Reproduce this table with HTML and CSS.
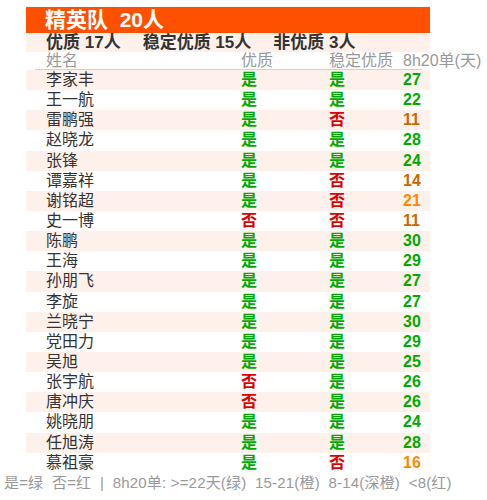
FILE: index.html
```html
<!DOCTYPE html>
<html lang="zh-CN">
<head>
    <meta charset="UTF-8">
    <meta name="viewport" content="width=device-width, initial-scale=1.0">
    <title>精英队</title>
    <link rel="stylesheet" href="styles.css">
</head>
<body>
    <div class="team-board">
        <div class="team-title">精英队&nbsp;&nbsp;20人</div>
        <div class="team-summary">
            <span>优质 17人</span>
            <span>稳定优质 15人</span>
            <span>非优质 3人</span>
        </div>
        <div class="team-row team-head">
            <div>姓名</div>
            <div>优质</div>
            <div>稳定优质</div>
            <div>8h20单(天)</div>
        </div>
        <div class="team-row"><div>李家丰</div><div class="yes">是</div><div class="yes">是</div><div class="d-green">27</div></div>
        <div class="team-row"><div>王一航</div><div class="yes">是</div><div class="yes">是</div><div class="d-green">22</div></div>
        <div class="team-row"><div>雷鹏强</div><div class="yes">是</div><div class="no">否</div><div class="d-dark">11</div></div>
        <div class="team-row"><div>赵晓龙</div><div class="yes">是</div><div class="yes">是</div><div class="d-green">28</div></div>
        <div class="team-row"><div>张锋</div><div class="yes">是</div><div class="yes">是</div><div class="d-green">24</div></div>
        <div class="team-row"><div>谭嘉祥</div><div class="yes">是</div><div class="no">否</div><div class="d-dark">14</div></div>
        <div class="team-row"><div>谢铭超</div><div class="yes">是</div><div class="no">否</div><div class="d-orange">21</div></div>
        <div class="team-row"><div>史一博</div><div class="no">否</div><div class="no">否</div><div class="d-dark">11</div></div>
        <div class="team-row"><div>陈鹏</div><div class="yes">是</div><div class="yes">是</div><div class="d-green">30</div></div>
        <div class="team-row"><div>王海</div><div class="yes">是</div><div class="yes">是</div><div class="d-green">29</div></div>
        <div class="team-row"><div>孙朋飞</div><div class="yes">是</div><div class="yes">是</div><div class="d-green">27</div></div>
        <div class="team-row"><div>李旋</div><div class="yes">是</div><div class="yes">是</div><div class="d-green">27</div></div>
        <div class="team-row"><div>兰晓宁</div><div class="yes">是</div><div class="yes">是</div><div class="d-green">30</div></div>
        <div class="team-row"><div>党田力</div><div class="yes">是</div><div class="yes">是</div><div class="d-green">29</div></div>
        <div class="team-row"><div>吴旭</div><div class="yes">是</div><div class="yes">是</div><div class="d-green">25</div></div>
        <div class="team-row"><div>张宇航</div><div class="no">否</div><div class="yes">是</div><div class="d-green">26</div></div>
        <div class="team-row"><div>唐冲庆</div><div class="no">否</div><div class="yes">是</div><div class="d-green">26</div></div>
        <div class="team-row"><div>姚晓朋</div><div class="yes">是</div><div class="yes">是</div><div class="d-green">24</div></div>
        <div class="team-row"><div>任旭涛</div><div class="yes">是</div><div class="yes">是</div><div class="d-green">28</div></div>
        <div class="team-row"><div>慕祖豪</div><div class="yes">是</div><div class="no">否</div><div class="d-orange">16</div></div>
    </div>
    <div class="legend">是=绿&nbsp;&nbsp;否=红&nbsp;&nbsp;|&nbsp;&nbsp;8h20单: &gt;=22天(绿)&nbsp;&nbsp;15-21(橙)&nbsp;&nbsp;8-14(深橙)&nbsp;&nbsp;&lt;8(红)</div>
</body>
</html>
```

FILE: styles.css
```css
body {
    margin: 0;
    padding-top: 7px;
    font-family: "Liberation Sans", "Noto Sans CJK SC", sans-serif;
    color: #333;
    background: #fff;
}
.team-board {
    width: 404px;
    margin-left: 26px;
}
.team-title {
    height: 26px;
    line-height: 25px;
    padding-left: 19px;
    background: #ff5000;
    color: #fff;
    font-size: 21px;
    font-weight: bold;
}
.team-summary {
    display: flex;
    gap: 22px;
    height: 19px;
    line-height: 19px;
    padding-left: 20px;
    background: #fef1ec;
    font-size: 17px;
    font-weight: bold;
}
.team-row {
    display: grid;
    grid-template-columns: 215px 88px 74px 27px;
    height: 20.15px;
    line-height: 20px;
    font-size: 16px;
    white-space: nowrap;
}
.team-row > div:first-child {
    padding-left: 20px;
}
.team-row:nth-child(even) {
    background: #fef1ec;
}
.team-head {
    height: 18px;
    line-height: 17px;
    color: #999;
    background: linear-gradient(#ffc2a4, #ffc2a4) 9px 100% / 387px 1px no-repeat;
}
.yes, .no, .d-green, .d-dark, .d-orange {
    font-weight: bold;
}
.yes, .d-green {
    color: #0a0;
}
.no {
    color: #d00;
}
.d-dark {
    color: #c60;
}
.d-orange {
    color: #f80;
}
.legend {
    padding: 0 0 0 4px;
    line-height: 19px;
    font-size: 15px;
    letter-spacing: 0.18px;
    color: #999;
    white-space: nowrap;
}
```
